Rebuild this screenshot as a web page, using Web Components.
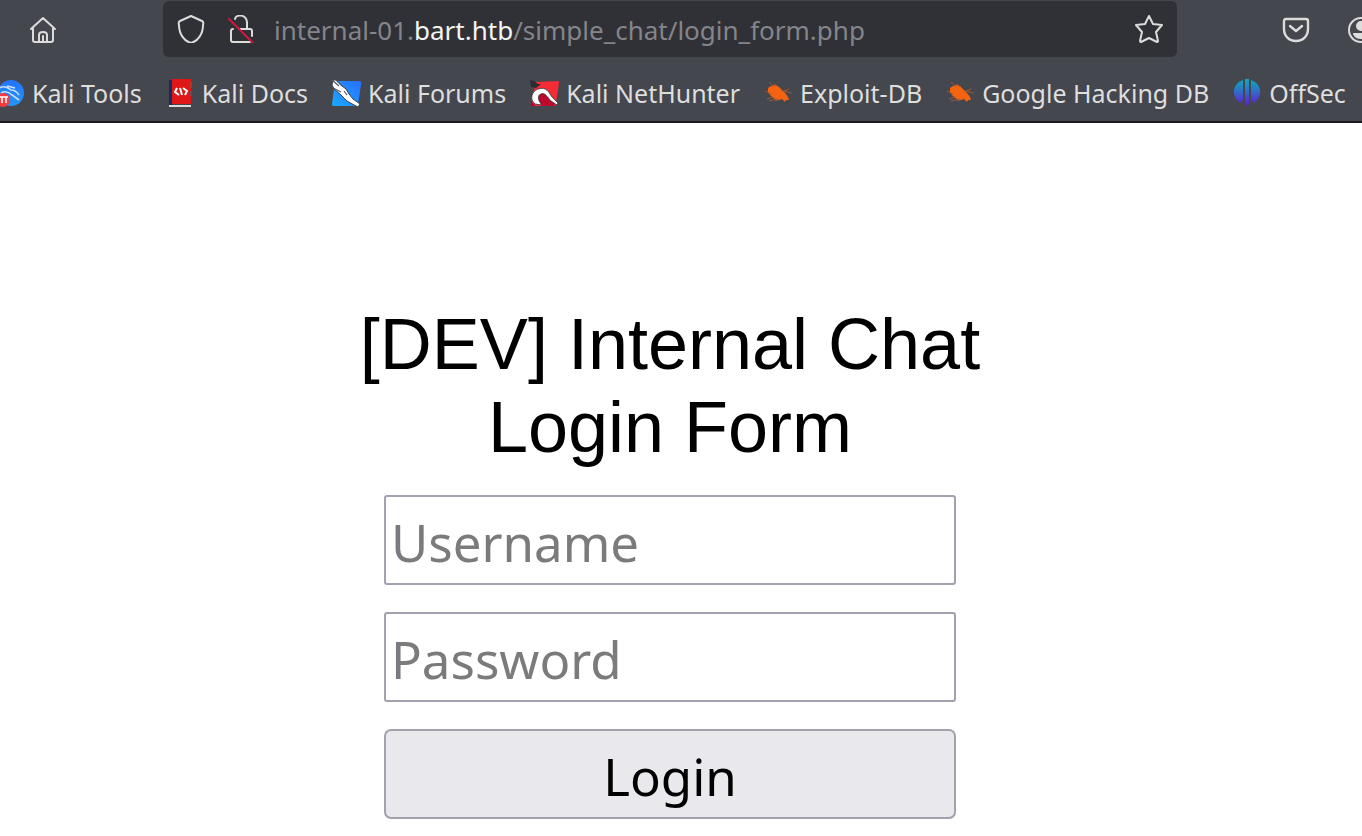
<!DOCTYPE html>
<html lang="en">
<head>
<meta charset="utf-8">
<title>[DEV] Internal Chat Login Form</title>
<style>
  body { margin: 0; background: #fff; font-family: "Noto Sans", sans-serif; overflow: hidden; }
</style>
</head>
<body>
<browser-toolbar></browser-toolbar>
<bookmark-bar>
  <bookmark-item icon="tools">Kali Tools</bookmark-item>
  <bookmark-item icon="docs">Kali Docs</bookmark-item>
  <bookmark-item icon="forums">Kali Forums</bookmark-item>
  <bookmark-item icon="nethunter">Kali NetHunter</bookmark-item>
  <bookmark-item icon="exploit">Exploit-DB</bookmark-item>
  <bookmark-item icon="exploit">Google Hacking DB</bookmark-item>
  <bookmark-item icon="offsec">OffSec</bookmark-item>
</bookmark-bar>
<login-page><span>[DEV] Internal Chat Login Form</span></login-page>

<script>
const icons = {
  tools: `<defs><linearGradient id="g" x1="0" y1="0" x2="0" y2="1"><stop offset="0" stop-color="#2474ff"/><stop offset="1" stop-color="#2196f8"/></linearGradient></defs><circle cx="15" cy="14" r="13" fill="url(#g)"/><path d="M3 9c6-3 9 0 12 2 4 0 6 2 8 5M5 14c5-3 9 0 11 2l7 5M11 7l8 2" fill="none" stroke="#c9e1ff" stroke-width="1.6"/><circle cx="7" cy="21" r="7" fill="#f83a3e"/><path d="M4 18h8M6 18v6M10 18v6" stroke="#fff" stroke-width="1.6"/>`,
  docs: `<path d="M3 1H7V25L4 27H3Z" fill="#142b63"/><path d="M6 0H25V25H6Z" fill="#df1718"/><path d="M3 27H25" stroke="#ded8d8" stroke-width="2"/><path d="M25 3v6" stroke="#8b5d36" stroke-width="1"/><path d="M25 12v5" stroke="#187b88" stroke-width="1"/><path d="M11 9 9 13 13 16M17 9 21 12 19 16M14 9 16 16" fill="none" stroke="#fff" stroke-width="2"/>`,
  forums: `<defs><linearGradient id="g" x1="0" y1="1" x2="1" y2="0"><stop stop-color="#1ba8ff"/><stop offset="1" stop-color="#2870ff"/></linearGradient></defs><path d="M3 2H27Q30 2 29 6L26 25Q25 27 23 27H1Q0 27 0 25Z" fill="url(#g)"/><path d="M1 1 4 1 10 7 14 10 17 15 21 20 28 25 26 28 22 26 15 22 8 15 2 10 0 6Z" fill="#fff" stroke="#36404c" stroke-width="1"/><path d="M0 1 7 7M4 1 10 7M1 9 9 13M12 12l3 4" stroke="#515661" stroke-width="1.2"/>`,
  nethunter: `<path d="M6 3 28 2Q29 2 29 4L26 24 25 27H3Q0 27 1 23Z" fill="#f52c36"/><path d="M0 1 4 2 8 5 11 5 6 9 1 8Z" fill="#2b2b31"/><path d="M7 22C6 14 12 12 16 16L25 23 24 27H11Z" fill="#bc082c"/><path d="M5 25C-1 20 2 12 8 10C17 7 19 14 22 18L28 24 27 26 21 22C17 18 15 13 11 15C7 16 8 22 12 26Z" fill="#fff" stroke="#333038" stroke-width=".8"/><path d="m1 21 4 6H1Z" fill="#b3003c"/>`,
  exploit: `<g fill="#f36310"><path d="M4 9 7 7 11 6 15 8 18 11 21 14 24 18 25 21 22 21 21 23 18 20 15 21 11 20 7 17 4 13Z"/><path d="M10 8 5 3M15 8 10 5M19 12 28 14M18 13 25 10M8 15 1 12M9 18 3 20M13 20 5 22M17 20 11 22" fill="none" stroke="#b85a2c" stroke-width=".8"/></g>`,
  offsec: `<defs><linearGradient id="g" x1="0" y1="0" x2="0" y2="27" gradientUnits="userSpaceOnUse"><stop offset=".05" stop-color="#12a3bd"/><stop offset=".5" stop-color="#3468c8"/><stop offset="1" stop-color="#6616d2"/></linearGradient></defs><path fill="url(#g)" d="M10 1V21L7 24C-1 18-1 8 6 3ZM12 0H16V25L14 27 12 25ZM18 1 22 3C29 8 29 18 21 24L18 21Z"/>`
};

function render(host, markup) {
  const t = document.createElement('template');
  t.innerHTML = markup;
  host.attachShadow({ mode: 'open' }).append(t.content.cloneNode(true));
}

class BrowserToolbar extends HTMLElement {
  constructor() {
    super();
    render(this, `<style>
      :host { display: flex; align-items: center; height: 60px; background: #45474e; overflow: hidden; }
      button { border: 0; padding: 0; background: none; color: #dcdcdb; display: grid; place-items: center; flex: none; }
      svg { width: 28px; height: 28px; fill: none; stroke: currentColor; stroke-width: 2; stroke-linejoin: round; stroke-linecap: round; }
      .home { width: 86px; margin-right: 77px; }
      .bar { flex: 1; min-width: 0; height: 56px; display: flex; align-items: center; gap: 22px; padding: 0 14px; margin-bottom: 2px; box-sizing: border-box; background: #303136; border-radius: 6px; }
      .url { flex: 1; min-width: 0; color: #84858a; font-size: 26px; line-height: 34px; white-space: nowrap; overflow: hidden; margin-left: -3px; padding-top: 2px; }
      .url b { font-weight: 400; color: #f4f4f2; }
      .side { display: flex; gap: 37px; padding-left: 105px; flex: none; width: 80px; }
    </style>
    <button class="home" aria-label="Home"><svg viewBox="0 0 28 28"><path d="M2 13 14 2 26 13M4 12V24Q4 26 6 26H22Q24 26 24 24V12M10 26V19Q10 16 14 16Q18 16 18 19V26M14 26V20" /></svg></button>
    <div class="bar">
      <button aria-label="Tracking protection"><svg viewBox="0 0 28 28"><path d="M14 1 25 6Q27 7 26 10C26 19 21 26 14 28C7 26 2 19 2 10Q1 7 3 6Z"/></svg></button>
      <button aria-label="Connection not secure"><svg viewBox="0 0 28 28"><path d="M8 4C9-1 19-1 20 7V13M13 14H23Q25 14 25 16V21M6 14Q4 14 4 16V25Q4 27 6 27H23"/><path d="M2 4 26 28" stroke="#d3173f"/></svg></button>
      <div class="url"><span>internal-01.<b>bart.htb</b>/simple_chat/login_form.php</span></div>
      <button aria-label="Bookmark this page"><svg viewBox="0 0 28 28"><path d="m14 1 4 8 9 1-6 7 2 9q0 1-1 1l-8-4-8 4q-1 0-1-1l2-9-6-7 9-1Z"/></svg></button>
    </div>
    <div class="side">
      <button aria-label="Save to Pocket"><svg viewBox="0 0 28 28"><path d="M4 3H24Q26 3 26 5V13C26 20 21 25 14 25S2 20 2 13V5Q2 3 4 3ZM8 10 14 15 20 10" stroke-width="2.4"/></svg></button>
      <button aria-label="Account"><svg viewBox="0 0 28 28"><circle cx="14" cy="14" r="12"/><circle cx="14" cy="10" r="4" fill="currentColor"/><path d="M7 18H21Q19 22 14 22T7 18Z" fill="currentColor"/></svg></button>
    </div>`);
  }
}
customElements.define('browser-toolbar', BrowserToolbar);

class BookmarkBar extends HTMLElement {
  constructor() {
    super();
    render(this, `<style>
      :host { display: block; background: #45474e; border-bottom: 2px solid #1c1b20; overflow: hidden; }
      nav { display: flex; align-items: center; gap: 24px; height: 61px; margin-left: -4px; }
    </style><nav aria-label="Bookmarks"><slot></slot></nav>`);
  }
}
customElements.define('bookmark-bar', BookmarkBar);

class BookmarkItem extends HTMLElement {
  constructor() {
    super();
    render(this, `<style>
      :host { display: block; flex: none; }
      a { display: flex; align-items: center; gap: 8px; color: #dededd; text-decoration: none; font-size: 25px; line-height: 34px; white-space: nowrap; padding-top: 5px; }
      svg { width: 28px; height: 28px; flex: none; overflow: visible; }
    </style><a href="#"><svg viewBox="0 0 28 28" aria-hidden="true">${icons[this.getAttribute('icon')]}</svg><slot></slot></a>`);
  }
}
customElements.define('bookmark-item', BookmarkItem);

class LoginPage extends HTMLElement {
  constructor() {
    super();
    render(this, `<style>
      :host { display: block; padding: 180px 22px 0 0; background: #fff; }
      main { width: 636px; max-width: 100%; margin: 0 auto; }
      h1 { margin: 0 0 26px; font: 400 72px/83px "Liberation Sans", Arial, sans-serif; text-align: center; color: #000; }
      form { display: grid; gap: 27px; padding: 0 32px; }
      input, button { box-sizing: border-box; width: 100%; height: 90px; border: 2px solid #a2a2ae; border-radius: 3px; font: 400 51px/70px "Noto Sans", sans-serif; color: #000; background: #fff; }
      input { padding: 4px 5px 0; }
      input::placeholder { color: #7b7b7b; opacity: 1; }
      button { padding: 4px 5px 0; border-radius: 7px; background: #e9e8ec; }
    </style>
    <main>
      <h1><slot></slot></h1>
      <form>
        <input type="text" name="uname" placeholder="Username" aria-label="Username">
        <input type="password" name="passwd" placeholder="Password" aria-label="Password">
        <button type="button">Login</button>
      </form>
    </main>`);
  }
}
customElements.define('login-page', LoginPage);
</script>
</body>
</html>
